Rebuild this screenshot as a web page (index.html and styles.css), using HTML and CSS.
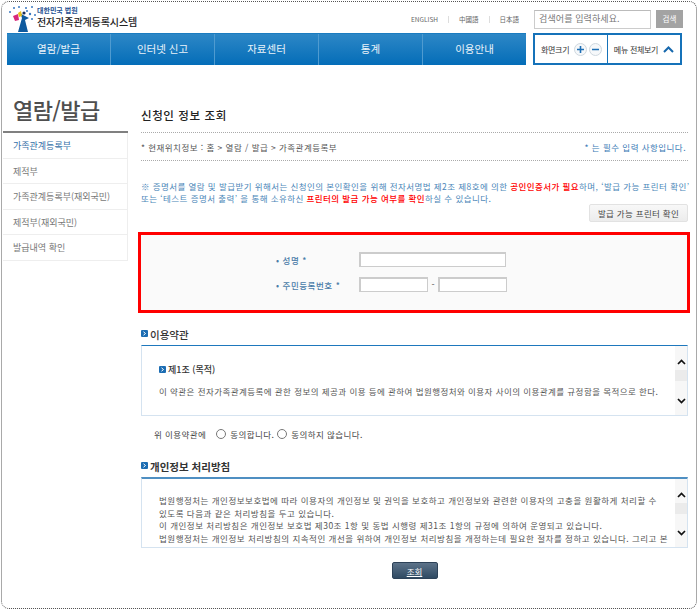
FILE: index.html
```html
<!DOCTYPE html>
<html lang="ko">
<head>
<meta charset="utf-8">
<title>전자가족관계등록시스템</title>
<link rel="stylesheet" href="styles.css">
</head>
<body>
<div class="frame">
  <header class="top">
    <div class="logo">
      <svg class="logo-mark" width="30" height="27" viewBox="0 0 30 27">
        <g fill="#3a78c0"><circle cx="3" cy="7" r="1"/><circle cx="7" cy="3" r="1"/><circle cx="12" cy="2" r="1"/><circle cx="19" cy="3" r="1"/><circle cx="25" cy="2" r="1"/><circle cx="28" cy="10" r="1"/><circle cx="23" cy="9" r="1.2"/><circle cx="25" cy="14" r="1"/><circle cx="20" cy="6" r="1"/></g>
        <path d="M11 27 L15 13 L13 8 L16 10 L22 13 L18 15 L21 27 Z" fill="#0e5a9e"/>
        <path d="M6 11 L11 9 L12 15 L8 16 Z" fill="#d8287a"/>
        <path d="M11 8 L14 6 L15 11 L12 12 Z" fill="#e8c01a"/>
        <circle cx="17" cy="8" r="1.6" fill="#1b2f5b"/>
      </svg>
      <div class="logo-text">
        <span class="logo-small">대한민국 법원</span>
        <span class="logo-big">전자가족관계등록시스템</span>
      </div>
    </div>
    <div class="top-right">
      <a class="lang">ENGLISH</a><i class="sep"></i><a class="lang">中國語</a><i class="sep"></i><a class="lang">日本語</a>
      <div class="search-input">검색어를 입력하세요.</div>
      <div class="search-btn">검색</div>
    </div>
  </header>

  <div class="navrow">
    <nav class="gnb">
      <a>열람/발급</a><a>인터넷 신고</a><a>자료센터</a><a>통계</a><a>이용안내</a>
    </nav>
    <div class="tools">
      <div class="tool-zoom">화면크기
        <span class="circle"><svg width="9" height="9" viewBox="0 0 9 9"><path d="M4.5 1v7M1 4.5h7" stroke="#1f6fb5" stroke-width="1.6"/></svg></span>
        <span class="circle"><svg width="9" height="9" viewBox="0 0 9 9"><path d="M1 4.5h7" stroke="#1f6fb5" stroke-width="1.4"/></svg></span>
      </div>
      <div class="tool-menu">메뉴 전체보기
        <svg width="11" height="7" viewBox="0 0 11 7"><path d="M1 6 L5.5 1.5 L10 6" fill="none" stroke="#1668ad" stroke-width="2"/></svg>
      </div>
    </div>
  </div>

  <div class="body">
    <aside class="side">
      <h2 class="side-title">열람/발급</h2>
      <ul class="side-menu">
        <li class="on">가족관계등록부</li>
        <li>제적부</li>
        <li>가족관계등록부(재외국민)</li>
        <li>제적부(재외국민)</li>
        <li>발급내역 확인</li>
      </ul>
    </aside>

    <main class="main">
      <h1 class="page-title">신청인 정보 조회</h1>
      <div class="crumb">
        <span>* 현재위치정보 : 홈 &gt; 열람 / 발급 &gt; 가족관계등록부</span>
        <span class="req">* 는 필수 입력 사항입니다.</span>
      </div>
      <p class="notice">※ 증명서를 열람 및 발급받기 위해서는 신청인의 본인확인을 위해 전자서명법 제2조 제8호에 의한 <b>공인인증서가 필요</b>하며, ‘발급 가능 프린터 확인’<br>또는 ‘테스트 증명서 출력’ 을 통해 소유하신 <b>프린터의 발급 가능 여부를 확인</b>하실 수 있습니다.</p>
      <div class="printer-row"><button class="printer-btn">발급 가능 프린터 확인</button></div>

      <section class="form-box">
        <div class="form-row">
          <label>• 성명 *</label>
          <span class="field wide"></span>
        </div>
        <div class="form-row">
          <label>• 주민등록번호 *</label>
          <span class="field short"></span><span class="dash">-</span><span class="field short"></span>
        </div>
      </section>

      <h3 class="sec-title"><svg class="bullet" width="7" height="7" viewBox="0 0 7 7"><rect width="7" height="7" rx="1" fill="#1c6db3"/><path d="M2.5 1.8 L4.5 3.5 L2.5 5.2" fill="none" stroke="#fff"/></svg>이용약관</h3>
      <div class="scroll terms">
        <div class="scroll-body">
          <p class="terms-head"><svg class="bullet" width="7" height="7" viewBox="0 0 7 7"><rect width="7" height="7" rx="1" fill="#1c6db3"/><path d="M2.5 1.8 L4.5 3.5 L2.5 5.2" fill="none" stroke="#fff"/></svg>제1조 (목적)</p>
          <p class="terms-text">이 약관은 전자가족관계등록에 관한 정보의 제공과 이용 등에 관하여 법원행정처와 이용자 사이의 이용관계를 규정함을 목적으로 한다.</p>
        </div>
        <div class="bar">
          <svg width="9" height="6" viewBox="0 0 9 6"><path d="M1 5 L4.5 1.5 L8 5" fill="none" stroke="#111" stroke-width="1.7"/></svg>
          <i class="thumb"></i>
          <svg class="down" width="9" height="6" viewBox="0 0 9 6"><path d="M1 1 L4.5 4.5 L8 1" fill="none" stroke="#111" stroke-width="1.7"/></svg>
        </div>
      </div>
      <div class="agree">
        <span class="agree-label">위 이용약관에</span>
        <i class="radio"></i><span>동의합니다.</span>
        <i class="radio"></i><span>동의하지 않습니다.</span>
      </div>

      <h3 class="sec-title sec-two"><svg class="bullet" width="7" height="7" viewBox="0 0 7 7"><rect width="7" height="7" rx="1" fill="#1c6db3"/><path d="M2.5 1.8 L4.5 3.5 L2.5 5.2" fill="none" stroke="#fff"/></svg>개인정보 처리방침</h3>
      <div class="scroll privacy">
        <div class="scroll-body">
          <p class="privacy-text">법원행정처는 개인정보보호법에 따라 이용자의 개인정보 및 권익을 보호하고 개인정보와 관련한 이용자의 고충을 원활하게 처리할 수<br>있도록 다음과 같은 처리방침을 두고 있습니다.<br>이 개인정보 처리방침은 개인정보 보호법 제30조 1항 및 동법 시행령 제31조 1항의 규정에 의하여 운영되고 있습니다.<br>법원행정처는 개인정보 처리방침의 지속적인 개선을 위하여 개인정보 처리방침을 개정하는데 필요한 절차를 정하고 있습니다. 그리고 본</p>
        </div>
        <div class="bar">
          <svg width="9" height="6" viewBox="0 0 9 6"><path d="M1 5 L4.5 1.5 L8 5" fill="none" stroke="#111" stroke-width="1.7"/></svg>
          <i class="thumb"></i>
          <svg class="down" width="9" height="6" viewBox="0 0 9 6"><path d="M1 1 L4.5 4.5 L8 1" fill="none" stroke="#111" stroke-width="1.7"/></svg>
        </div>
      </div>
      <div class="submit-row"><button class="submit">조회</button></div>
    </main>
  </div>
</div>
</body>
</html>
```

FILE: styles.css
```css
* { box-sizing: border-box; }
html, body { margin: 0; padding: 0; background: #fff; }
body { width: 700px; height: 611px; overflow: hidden; font-family: "Noto Sans CJK KR", "Liberation Sans", sans-serif; font-size: 9px; color: #555; padding: 1px 3px 2px 1px; }
p, h1, h2, h3, ul { margin: 0; padding: 0; }
.frame { width: 696px; height: 608px; border: 1px dotted #555; border-radius: 8px; overflow: hidden; }

.top { height: 31px; display: flex; justify-content: space-between; padding-left: 5px; }
.logo { display: flex; align-items: flex-start; padding-top: 2px; }
.logo-mark { margin-top: 1px; }
.logo-text { display: flex; flex-direction: column; margin-left: 0; }
.logo-small { font-size: 7px; line-height: 9px; color: #1d4f91; font-weight: 700; padding-top: 2px; }
.logo-big { font-size: 10px; line-height: 13px; color: #222; font-weight: 500; letter-spacing: -0.1px; }
.top-right { display: flex; align-items: center; height: 24px; margin-top: 5px; padding-right: 13px; }
.lang { font-size: 6.5px; color: #666; }
.sep { width: 1px; height: 7px; background: #ddd; margin: 0 10px; }
.search-input { width: 117px; height: 19px; margin-left: 15px; border: 1px solid #ccc; border-top-color: #bbb; padding-left: 4px; font-size: 9px; line-height: 16px; color: #777; letter-spacing: 0.1px; }
.search-btn { width: 27px; height: 18px; margin-left: 5px; background: #a3a3a3; color: #fff; font-size: 7.5px; line-height: 18px; text-align: center; }

.navrow { display: flex; padding-left: 5px; height: 32px; }
.gnb { width: 519px; height: 32px; display: flex; background: linear-gradient(#2d87c6, #046db8); border-top: 1px solid #1a7cc0; }
.gnb a { width: 104px; color: #eaf3fa; text-align: center; font-size: 10.5px; line-height: 30px; border-right: 1px solid #4f9bd0; }
.gnb a:last-child { width: 103px; border-right: 0; }
.tools { width: 149px; height: 32px; margin-left: 7px; border: 2px solid #1572b9; display: flex; background: #fff; }
.tool-zoom { width: 73px; border-right: 1px solid #1572b9; display: flex; align-items: center; padding-left: 6px; font-size: 8px; color: #333; letter-spacing: -0.3px; }
.circle { width: 13px; height: 13px; border: 1px solid #cfd8df; border-radius: 50%; display: flex; align-items: center; justify-content: center; margin-left: 2px; background: #f6f8fa; }
.circle:first-of-type { margin-left: 5px; }
.circle svg { display: block; }
.tool-menu { flex: 1; display: flex; align-items: center; justify-content: center; gap: 5px; font-size: 8px; color: #333; letter-spacing: -0.3px; }

.body { display: flex; }
.side { width: 125px; margin-left: 1px; }
.side-title { font-size: 22px; font-weight: 500; color: #4f4f4f; line-height: 33px; padding: 0 0 0 10px; margin-top: 28px; height: 38px; letter-spacing: -0.6px; }
.side-menu { list-style: none; border-top: 2px solid #808080; margin-top: 0; }
.side-menu li { height: 25.5px; line-height: 26px; padding-left: 10px; font-size: 9px; color: #777; border-bottom: 1px solid #eee; border-right: 1px solid #eee; }
.side-menu li.on { color: #336fa8; font-weight: 400; }

.main { width: 547px; margin-left: 13px; padding-top: 0; }
.page-title { font-size: 11.5px; font-weight: 500; color: #222; line-height: 15px; margin-top: 43px; letter-spacing: 0.6px; }
.crumb { margin-top: 9px; height: 29px; border-top: 1px dotted #aaa; border-bottom: 1px dotted #aaa; display: flex; justify-content: space-between; align-items: center; font-size: 8.5px; color: #555; letter-spacing: 0.46px; padding-right: 2px; }
.req { color: #3a7ab5; }
.notice { margin-top: 20px; font-size: 8.5px; line-height: 11.5px; color: #4a86b8; letter-spacing: 0.43px; white-space: nowrap; }
.notice b { color: #f00; font-weight: 500; }
.printer-row { display: flex; justify-content: flex-end; margin-top: 0; }
.printer-btn { width: 99px; height: 18px; margin-right: 0; padding: 0; border: 1px solid #e2e2e2; border-radius: 2px; background: linear-gradient(#f8f8f8, #ececec); font: inherit; font-size: 8.5px; color: #444; letter-spacing: 0.3px; }

.form-box { margin-top: 10px; margin-left: -3px; width: 552px; height: 81px; border: 3px solid #f00; background: #fafafa; padding-top: 12px; }
.form-row { display: flex; align-items: center; height: 25px; padding-left: 135px; }
.form-row label { width: 83px; font-size: 8.5px; color: #4a7ca8; font-weight: 500; letter-spacing: 0.55px; white-space: nowrap; }
.field { display: block; height: 15px; background: #fff; border: 1px solid #ccc; border-top-width: 2px; border-left-width: 2px; }
.field.wide { width: 147px; }
.field.short { width: 69px; }
.dash { width: 10px; text-align: center; font-size: 9px; }

.sec-title { margin-top: 12px; height: 20px; font-size: 10.5px; font-weight: 500; color: #333; line-height: 20px; display: flex; align-items: center; }
.bullet { margin-right: 2px; flex: none; margin-top: -3px; }
.scroll { position: relative; width: 547px; border: 1px solid #d5e3f0; border-top: 1px solid #1e78bd; overflow: hidden; }
.terms { height: 71px; }
.privacy { height: 71px; border-top: 2px solid #4f8fc2; }
.scroll-body { padding-left: 17px; }
.bar { position: absolute; top: 0; right: 0; bottom: 0; width: 12px; background: #f7f7f7; display: flex; flex-direction: column; align-items: center; padding-top: 13px; }
.thumb { display: block; width: 12px; height: 11px; background: #ebebeb; margin-top: 5px; }
.down { margin-top: auto; margin-bottom: 11px; }
.terms-head { margin-top: 18px; font-size: 9px; line-height: 12px; font-weight: 500; color: #333; display: flex; align-items: center; }
.terms-head .bullet { margin-top: -2px; margin-right: 2px; }
.terms-text { margin-top: 9px; font-size: 8.5px; line-height: 12px; color: #555; white-space: nowrap; letter-spacing: 0.44px; }
.agree { margin-top: 11px; padding-left: 13px; display: flex; align-items: center; font-size: 8.5px; color: #444; height: 14px; letter-spacing: 0.42px; }
.agree-label { margin-right: 7px; }
.radio { width: 10px; height: 10px; border: 1px solid #777; border-radius: 50%; margin-right: 4px; background: #fff; margin-left: 3px; }
.sec-two { margin-top: 16px; font-weight: 700; }
.privacy-text { margin-top: 15px; font-size: 8.5px; line-height: 12.7px; color: #555; white-space: nowrap; letter-spacing: 0.5px; }
.submit-row { display: flex; justify-content: center; margin-top: 14px; }
.submit { width: 46px; height: 17px; padding: 0; border: 1px solid #2d4258; border-radius: 2px; background: linear-gradient(#5d7389, #2f4a63); color: #fff; font: inherit; font-size: 8.5px; text-decoration: underline; }
```
